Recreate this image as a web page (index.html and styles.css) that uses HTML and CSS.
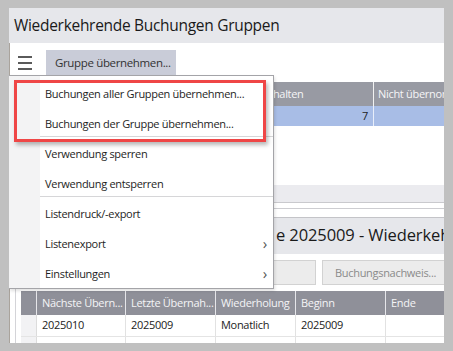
FILE: index.html
```html
<!DOCTYPE html>
<html lang="de">
<head>
    <meta charset="UTF-8">
    <title>Wiederkehrende Buchungen Gruppen</title>
    <link rel="stylesheet" href="styles.css">
</head>
<body>
    <div class="window">
        <div class="title">Wiederkehrende Buchungen Gruppen</div>

        <div class="toolbar">
            <span class="burger"><i></i><i></i><i></i></span>
            <span class="tool-btn">Gruppe übernehmen...</span>
        </div>

        <div class="grid top-grid">
            <div class="row head">
                <div class="cell c-name">Gruppe</div>
                <div class="cell c-count">Enthalten</div>
                <div class="cell c-rest">Nicht übernommen</div>
            </div>
            <div class="row selected">
                <div class="cell c-name">2025009</div>
                <div class="cell c-count num">7</div>
                <div class="cell c-rest"></div>
            </div>
        </div>

        <div class="splitter"></div>

        <div class="detail">
            <div class="title sub-title"><span class="covered">Buchungen der Grupp</span>e 2025009 - Wiederkehrende Buchungen</div>
            <div class="btn-bar">
                <span class="btn wide">Bearbeiten...</span>
                <span class="btn">Buchungsnachweis...</span>
            </div>
            <div class="grid bottom-grid">
                <div class="row head">
                    <div class="cell rh"></div>
                    <div class="cell d1">Nächste Übern...</div>
                    <div class="cell d2">Letzte Übernah...</div>
                    <div class="cell d3">Wiederholung</div>
                    <div class="cell d4">Beginn</div>
                    <div class="cell d5">Ende</div>
                </div>
                <div class="row">
                    <div class="cell rh"></div>
                    <div class="cell d1">2025010</div>
                    <div class="cell d2">2025009</div>
                    <div class="cell d3">Monatlich</div>
                    <div class="cell d4">2025009</div>
                    <div class="cell d5"></div>
                </div>
                <div class="row">
                    <div class="cell rh"></div>
                    <div class="cell d1">2025001</div>
                    <div class="cell d2">2024012</div>
                    <div class="cell d3">Monatlich</div>
                    <div class="cell d4">2024001</div>
                    <div class="cell d5"></div>
                </div>
            </div>
        </div>

        <!-- Kontextmenü -->
        <ul class="menu">
            <li class="item">Buchungen aller Gruppen übernehmen...</li>
            <li class="item sep">Buchungen der Gruppe übernehmen...</li>
            <li class="item">Verwendung sperren</li>
            <li class="item sep">Verwendung entsperren</li>
            <li class="item">Listendruck/-export</li>
            <li class="item sub">Listenexport</li>
            <li class="item sub">Einstellungen</li>
        </ul>

        <div class="highlight"></div>
    </div>
</body>
</html>
```

FILE: styles.css
```css
/* Grundlayout */
body {
    margin: 0;
    padding: 8px 0 0 9px;
    background-color: #c0c0c0;
    font-family: "Open Sans", "Noto Sans", sans-serif;
    color: #222;
}

.window {
    position: relative;
    width: 435px;
    height: 335px;
    background-color: white;
    overflow: hidden;
    box-shadow: inset 1px 0 0 #a9a39c;
}

.title {
    height: 35px;
    line-height: 35px;
    padding-left: 5px;
    background-color: #e6e7eb;
    font-size: 15.5px;
    letter-spacing: -0.3px;
    white-space: nowrap;
    color: #1a1a1a;
}

/* Werkzeugleiste */
.toolbar {
    display: flex;
    align-items: flex-start;
    height: 32px;
    padding-top: 7px;
    box-sizing: border-box;
}

.burger {
    display: flex;
    flex-direction: column;
    gap: 4px;
    width: 14px;
    margin: 6px 14px 0 9px;
}

.burger i {
    display: block;
    height: 2px;
    background-color: #5a5a5a;
}

.tool-btn {
    width: 130px;
    height: 25px;
    line-height: 25px;
    padding-left: 9px;
    box-sizing: border-box;
    background-color: #c9ccd8;
    font-size: 11.5px;
    letter-spacing: -0.35px;
    color: #333;
    white-space: nowrap;
}

/* Tabellen */
.grid {
    font-size: 11px;
    letter-spacing: -0.3px;
}

.row {
    display: flex;
    height: 20px;
    line-height: 20px;
}

.cell {
    flex: none;
    padding: 0 5px;
    box-sizing: border-box;
    overflow: hidden;
    white-space: nowrap;
    border-right: 1px solid #e2e2e2;
}

.top-grid {
    margin-top: 7px;
}

.top-grid .head {
    height: 24px;
    line-height: 24px;
    background-color: #989aa3;
    color: #f5f5f7;
}

.top-grid .head .cell {
    border-right-color: #f2f2f2;
}

.top-grid .selected {
    background-color: #a8bde6;
}

.top-grid .selected .cell {
    border-right-color: #e8eefa;
}

.c-name { width: 244px; }
.c-count { width: 121px; padding-left: 4px; }
.c-rest { width: 120px; padding-left: 4px; }
.num { text-align: right; padding-right: 5px; }

.splitter {
    height: 17px;
    margin-top: 59px;
    background-color: #ebebef;
    border-bottom: 1px solid #c9c9cd;
}

/* unterer Bereich */
.detail {
    margin: 5px 0 0 6px;
    border-left: 1px solid #d4d4d8;
    border-top: 1px solid #cdcdd1;
}

.detail .sub-title {
    margin-top: 8px;
    border-top: 1px solid #c4c4c8;
    height: 36px;
    line-height: 34px;
    padding-left: 0;
    margin-left: -7px;
    font-size: 16.5px;
    letter-spacing: -0.1px;
}

/* Anfang des Titels liegt unter dem Menü */
.covered {
    display: inline-block;
    width: 267px;
    padding-right: 4px;
    box-sizing: border-box;
    text-align: right;
    overflow: hidden;
    vertical-align: top;
}

.btn-bar {
    display: flex;
    gap: 6px;
    padding: 6px 0 0 110px;
    height: 37px;
    box-sizing: border-box;
}

.btn {
    flex: none;
    height: 25px;
    line-height: 23px;
    box-sizing: border-box;
    padding: 0 12px;
    background-color: #ececec;
    border: 1px solid #d2d2d2;
    font-size: 11px;
    letter-spacing: -0.3px;
    color: #8a8a8a;
    white-space: nowrap;
}

.btn.wide {
    width: 190px;
}

.bottom-grid {
    margin-left: 5px;
}

.bottom-grid .row {
    border-bottom: 1px solid #e4e4e4;
    height: 21px;
}

.bottom-grid .head {
    height: 24px;
    line-height: 24px;
    border-bottom: none;
    background-color: #8f9099;
    color: #f4f4f6;
}

.bottom-grid .head .cell {
    border-right-color: #e6e6ea;
}

.bottom-grid .rh {
    width: 16px;
    padding: 0;
    background-color: #f2f2f4;
    border-right-color: #dcdcdc;
}

.bottom-grid .head .rh {
    background-color: #8f9099;
}

.d1 { width: 89px; }
.d2 { width: 90px; }
.d3 { width: 80px; }
.d4 { width: 90px; }
.d5 { width: 80px; }

/* Kontextmenü */
.menu {
    position: absolute;
    left: 0;
    top: 67px;
    width: 265px;
    margin: 0;
    padding: 3px 0 0;
    list-style: none;
    box-sizing: border-box;
    height: 214px;
    background: linear-gradient(to right, #f3f3f4 31px, white 31px);
    border: 1px solid #a4a4a8;
    border-left: none;
    box-shadow: 1px 2px 3px rgba(0, 0, 0, 0.12);
    font-size: 11px;
    letter-spacing: -0.3px;
    color: #1e1e1e;
}

.item {
    position: relative;
    height: 30px;
    line-height: 30px;
    padding-left: 36px;
    white-space: nowrap;
}

.item.sep::after {
    content: "";
    position: absolute;
    left: 31px;
    right: 0;
    bottom: 2px;
    height: 1px;
    background-color: #d6d6d8;
}

.item.sub::after {
    content: "\203A";
    position: absolute;
    right: 6px;
    top: -1px;
    font-size: 15px;
    color: #555;
}

/* rote Markierung */
.highlight {
    position: absolute;
    left: 5px;
    top: 72px;
    width: 252px;
    height: 62px;
    box-sizing: border-box;
    border: 3px solid #ef4646;
    box-shadow: 2px 3px 4px rgba(0, 0, 0, 0.28);
}
```
